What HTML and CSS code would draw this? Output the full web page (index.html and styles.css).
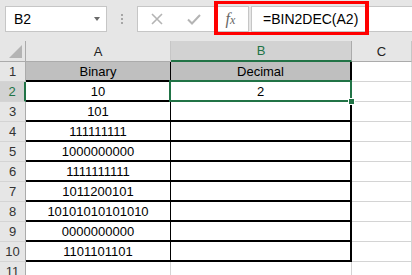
FILE: index.html
```html
<!DOCTYPE html>
<html lang="en">
<head>
    <meta charset="UTF-8">
    <meta name="viewport" content="width=device-width, initial-scale=1.0">
    <title>BIN2DEC</title>
    <link rel="stylesheet" href="styles.css">
</head>
<body>
    <div class="formula-bar">
        <div class="name-box">
            <span>B2</span>
            <span class="drop"></span>
        </div>
        <div class="grip"><i></i><i></i><i></i></div>
        <div class="buttons">
            <span class="btn">
                <svg width="12" height="12" viewBox="0 0 12 12"><path d="M1 1 L11 11 M11 1 L1 11" stroke="#b4b4b4" stroke-width="1.6" fill="none"/></svg>
            </span>
            <span class="btn">
                <svg width="14" height="11" viewBox="0 0 14 11"><path d="M1 5.5 L5 9.5 L13 1" stroke="#b4b4b4" stroke-width="2" fill="none"/></svg>
            </span>
            <span class="fx"><i>f</i><i class="x">x</i></span>
        </div>
        <div class="formula">=BIN2DEC(A2)</div>
        <div class="highlight"></div>
    </div>

    <div class="sheet">
        <div class="corner"><svg width="13" height="13" viewBox="0 0 13 13"><polygon points="13,0 13,13 0,13" fill="#b4b4b4"/></svg></div>
        <div class="col-head">A</div>
        <div class="col-head sel">B</div>
        <div class="col-head">C</div>

        <div class="row-head">1</div>
        <div class="cell box title">Binary</div>
        <div class="cell box title">Decimal</div>
        <div class="cell"></div>

        <div class="row-head sel">2</div>
        <div class="cell box">10</div>
        <div class="cell box">2</div>
        <div class="cell"></div>

        <div class="row-head">3</div>
        <div class="cell box">101</div>
        <div class="cell box"></div>
        <div class="cell"></div>

        <div class="row-head">4</div>
        <div class="cell box">111111111</div>
        <div class="cell box"></div>
        <div class="cell"></div>

        <div class="row-head">5</div>
        <div class="cell box">1000000000</div>
        <div class="cell box"></div>
        <div class="cell"></div>

        <div class="row-head">6</div>
        <div class="cell box">1111111111</div>
        <div class="cell box"></div>
        <div class="cell"></div>

        <div class="row-head">7</div>
        <div class="cell box">1011200101</div>
        <div class="cell box"></div>
        <div class="cell"></div>

        <div class="row-head">8</div>
        <div class="cell box">10101010101010</div>
        <div class="cell box"></div>
        <div class="cell"></div>

        <div class="row-head">9</div>
        <div class="cell box">0000000000</div>
        <div class="cell box"></div>
        <div class="cell"></div>

        <div class="row-head">10</div>
        <div class="cell box">1101101101</div>
        <div class="cell box"></div>
        <div class="cell"></div>

        <div class="row-head">11</div>
        <div class="cell"></div>
        <div class="cell"></div>
        <div class="cell"></div>

        <div class="selection"><span class="handle"></span></div>
    </div>
</body>
</html>
```

FILE: styles.css
```css
* {
    box-sizing: border-box;
}
body {
    margin: 0;
    background-color: #e6e6e6;
    font-family: "Liberation Sans", Arial, sans-serif;
    font-size: 13px;
    color: #000;
    overflow: hidden;
}

/* formula bar */
.formula-bar {
    position: relative;
    display: flex;
    align-items: flex-start;
    height: 41px;
    padding-top: 6px;
}
.name-box {
    display: flex;
    align-items: center;
    justify-content: space-between;
    width: 102px;
    height: 26px;
    margin-left: 5px;
    padding: 0 6px 0 8px;
    background: #fff;
    border: 1px solid #c6c6c6;
    font-size: 14px;
}
.drop {
    width: 0;
    height: 0;
    border-left: 3.5px solid transparent;
    border-right: 3.5px solid transparent;
    border-top: 4px solid #6a6a6a;
}
.grip {
    display: flex;
    flex-direction: column;
    align-items: center;
    gap: 2px;
    width: 30px;
    padding-top: 8px;
}
.grip i {
    width: 2px;
    height: 2px;
    background: #a6a6a6;
}
.buttons {
    display: flex;
    align-items: center;
    height: 26px;
    background: #fff;
    border: 1px solid #c6c6c6;
}
.btn {
    display: flex;
    align-items: center;
    justify-content: center;
    width: 36px;
    height: 100%;
}
.btn:first-child {
    width: 38px;
}
.fx {
    display: flex;
    align-items: center;
    justify-content: center;
    width: 32px;
    height: 100%;
    margin-left: 4px;
    padding-right: 4px;
    border-left: 1px solid #c6c6c6;
    font-family: "Liberation Serif", "Times New Roman", serif;
    font-size: 16px;
    color: #666;
}
.fx .x {
    font-size: 12px;
    margin-top: 3px;
}
.formula {
    flex: 1;
    height: 26px;
    margin-left: 2px;
    padding-left: 11px;
    line-height: 24px;
    background: #fff;
    border: 1px solid #c6c6c6;
    border-right: none;
    font-size: 14px;
}
.highlight {
    position: absolute;
    left: 214px;
    top: 1px;
    width: 155px;
    height: 34px;
    border: 3px solid #ff0000;
    border-left-width: 4px;
    border-right-width: 4px;
}

/* grid */
.sheet {
    position: relative;
    display: grid;
    grid-template-columns: 26px 145px 181px 1fr;
    grid-template-rows: 21px;
    grid-auto-rows: 20px;
    background: #fff;
}
.corner,
.col-head,
.row-head {
    display: flex;
    align-items: center;
    justify-content: center;
    background: #e6e6e6;
    color: #222;
    border-right: 1px solid #c6c6c6;
    border-bottom: 1px solid #ababab;
}
.corner {
    justify-content: flex-end;
    align-items: flex-end;
    padding: 0 3px 3px 0;
    border-right-color: #ababab;
}
.col-head.sel {
    background: #d2d2d2;
    color: #217346;
    border-bottom: 2px solid #217346;
    border-right-color: #ababab;
}
.row-head {
    color: #333;
    border-right-color: #ababab;
    border-bottom-color: #d4d4d4;
}
.row-head.sel {
    background: #d2d2d2;
    color: #217346;
    border-right: 2px solid #217346;
}
.cell {
    display: flex;
    align-items: center;
    justify-content: center;
    border-right: 1px solid #d4d4d4;
    border-bottom: 1px solid #d4d4d4;
}
.cell.box {
    padding-top: 1px;
    border-right-color: #000;
    border-bottom: 2px solid #000;
}
.cell.box:nth-child(4n+3) {
    border-right-width: 2px;
}
.cell.title {
    background: #bfbfbf;
}
.selection {
    position: absolute;
    left: 169px;
    top: 39px;
    width: 183px;
    height: 22px;
    border: 2px solid #217346;
}
.handle {
    position: absolute;
    right: -5px;
    bottom: -5px;
    width: 7px;
    height: 7px;
    background: #217346;
    border: 1px solid #fff;
}
```
